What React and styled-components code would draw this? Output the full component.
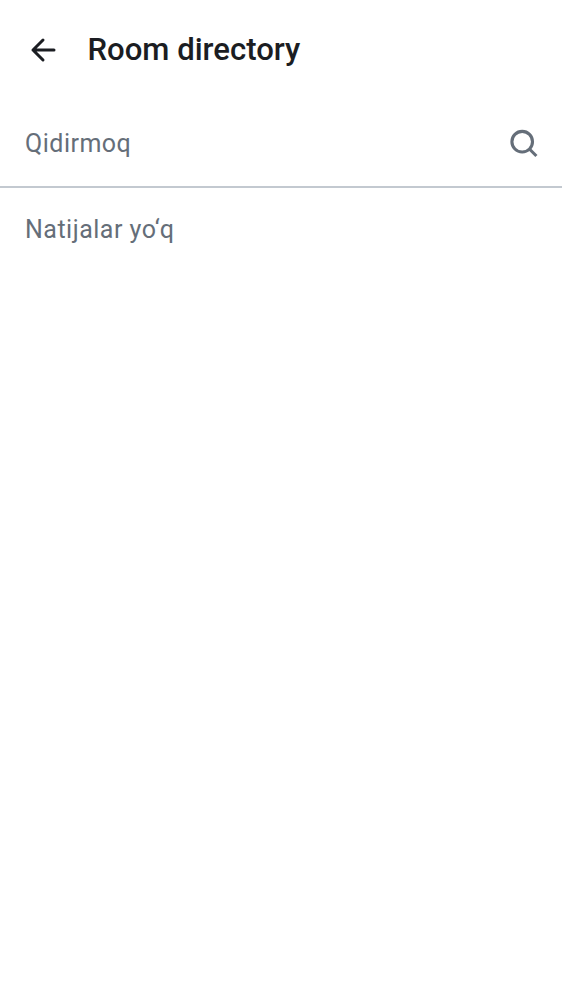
import React from "react";
import styled, { createGlobalStyle } from "styled-components";

const GlobalStyle = createGlobalStyle`
  * { box-sizing: border-box; }
  body { margin: 0; background: #fff; font-family: Roboto, sans-serif; }
`;
const Screen = styled.main`
  display: flex;
  flex-direction: column;
  min-height: 1000px;
  background: #fff;
`;
const TopBar = styled.header`
  display: flex;
  align-items: center;
  height: 100px;
  padding-left: 25px;
  gap: 24.5px;
`;
const IconButton = styled.button`
  display: flex;
  padding: 0;
  border: 0;
  background: none;
  color: ${(p) => p.$color};
`;
const Title = styled.h1`
  margin: 0;
  font-size: 31.1px;
  font-weight: 500;
  line-height: 40px;
  color: #1b1d22;
`;
const SearchField = styled.div`
  display: flex;
  align-items: center;
  justify-content: space-between;
  height: 88px;
  padding: 0 20px 0 25px;
  border-bottom: 2px solid #c3c9d0;
`;
const Text = styled.span`
  padding-top: ${(p) => p.$offset || 0}px;
  font-size: 25px;
  line-height: 36px;
  letter-spacing: 0.5px;
  color: #656e79;
`;
const Results = styled.section`
  padding: 24px 25px;
  display: flex;
`;

export default function App() {
  return (
    <Screen>
      <GlobalStyle />
      <TopBar>
        <IconButton $color="#1b1d22" aria-label="Back">
          <svg width="38" height="38" viewBox="0 0 38 38" fill="none" stroke="currentColor" strokeWidth="3" strokeLinecap="round" strokeLinejoin="round">
            <path d="M29 19H8M18 29L8 19 18 9" />
          </svg>
        </IconButton>
        <Title>Room directory</Title>
      </TopBar>
      <SearchField>
        <Text $offset={2}>Qidirmoq</Text>
        <IconButton $color="#656e79" aria-label="Qidirmoq">
          <svg width="37" height="37" viewBox="0 0 37 37" fill="none" stroke="currentColor" strokeWidth="3.1">
            <circle cx="17.2" cy="16.7" r="10.3" />
            <path d="M24.4 24L31.4 31" />
          </svg>
        </IconButton>
      </SearchField>
      <Results>
        <Text>Natijalar yo‘q</Text>
      </Results>
    </Screen>
  );
}
